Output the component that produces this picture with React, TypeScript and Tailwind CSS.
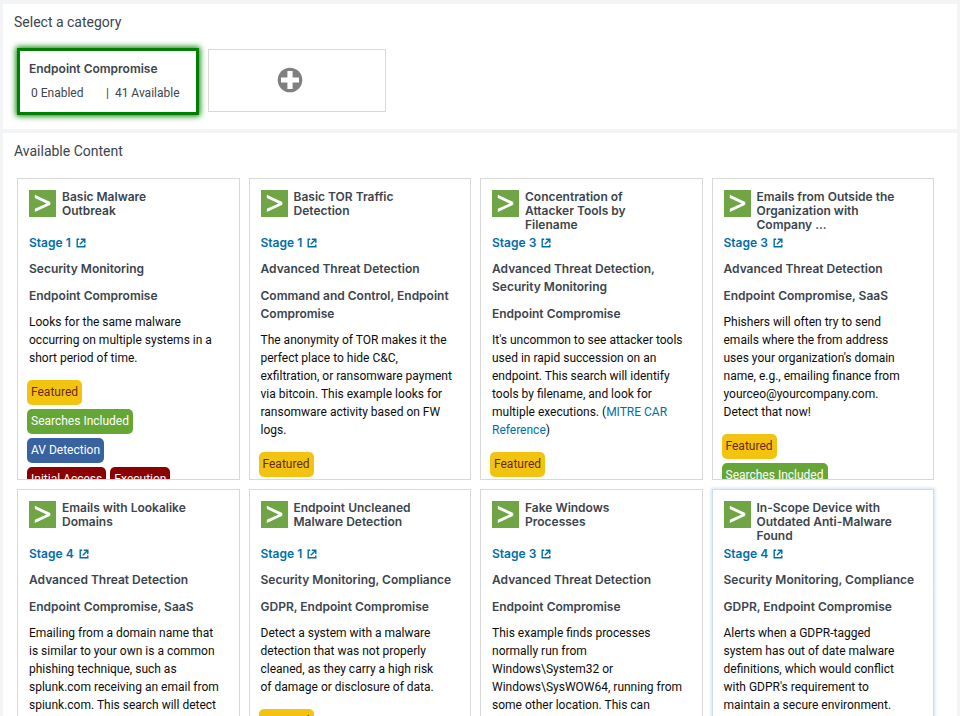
import React from "react";

type Tag = { label: string; style: string };

type Item = {
  title: string;
  stage: number;
  useCase: string;
  category: string;
  description: React.ReactNode;
  tags: Tag[];
  active?: boolean;
};

const featured: Tag = { label: "Featured", style: "bg-[#f2c311] text-[#6b2a12]" };
const searches: Tag = { label: "Searches Included", style: "bg-[#65a637] text-white" };
const avDetection: Tag = { label: "AV Detection", style: "bg-[#3863a0] text-white" };
const initialAccess: Tag = { label: "Initial Access", style: "bg-[#8b0000] text-white" };
const execution: Tag = { label: "Execution", style: "bg-[#8b0000] text-white" };

const items: Item[] = [
  {
    title: "Basic Malware\nOutbreak",
    stage: 1,
    useCase: "Security Monitoring",
    category: "Endpoint Compromise",
    description:
      "Looks for the same malware occurring on multiple systems in a short period of time.",
    tags: [featured, searches, avDetection, initialAccess, execution],
  },
  {
    title: "Basic TOR Traffic\nDetection",
    stage: 1,
    useCase: "Advanced Threat Detection",
    category: "Command and Control, Endpoint Compromise",
    description:
      "The anonymity of TOR makes it the perfect place to hide C&C, exfiltration, or ransomware payment via bitcoin. This example looks for ransomware activity based on FW logs.",
    tags: [featured],
  },
  {
    title: "Concentration of\nAttacker Tools by\nFilename",
    stage: 3,
    useCase: "Advanced Threat Detection, Security Monitoring",
    category: "Endpoint Compromise",
    description: (
      <>
        It's uncommon to see attacker tools used in rapid succession on an endpoint. This search
        will identify tools by filename, and look for multiple executions. (
        <a href="#mitre" className="text-[#006eaa]">
          MITRE CAR Reference
        </a>
        )
      </>
    ),
    tags: [featured],
  },
  {
    title: "Emails from Outside the\nOrganization with\nCompany ...",
    stage: 3,
    useCase: "Advanced Threat Detection",
    category: "Endpoint Compromise, SaaS",
    description:
      "Phishers will often try to send\nemails where the from address\nuses your organization's domain\nname, e.g., emailing finance from yourceo@yourcompany.com.\nDetect that now!",
    tags: [featured, searches],
  },
  {
    title: "Emails with Lookalike\nDomains",
    stage: 4,
    useCase: "Advanced Threat Detection",
    category: "Endpoint Compromise, SaaS",
    description:
      "Emailing from a domain name that\nis similar to your own is a common\nphishing technique, such as splunk.com receiving an email from spiunk.com. This search will detect",
    tags: [],
  },
  {
    title: "Endpoint Uncleaned\nMalware Detection",
    stage: 1,
    useCase: "Security Monitoring, Compliance",
    category: "GDPR, Endpoint Compromise",
    description:
      "Detect a system with a malware detection that was not properly cleaned, as they carry a high risk\nof damage or disclosure of data.",
    tags: [featured],
  },
  {
    title: "Fake Windows\nProcesses",
    stage: 3,
    useCase: "Advanced Threat Detection",
    category: "Endpoint Compromise",
    description:
      "This example finds processes normally run from Windows\\System32 or Windows\\SysWOW64, running from some other location. This can",
    tags: [],
  },
  {
    title: "In-Scope Device with\nOutdated Anti-Malware\nFound",
    stage: 4,
    useCase: "Security Monitoring, Compliance",
    category: "GDPR, Endpoint Compromise",
    description:
      "Alerts when a GDPR-tagged\nsystem has out of date malware\ndefinitions, which would conflict\nwith GDPR's requirement to\nmaintain a secure environment.",
    tags: [],
    active: true,
  },
];

function SearchIcon() {
  return (
    <svg viewBox="0 0 27 27" className="size-[27px] shrink-0" aria-hidden="true">
      <rect width="27" height="27" fill="#6fa544" />
      <path d="M5.8 4.8 L21.3 12 V14.8 L5.8 22 V18.8 L17.6 13.4 L5.8 8 Z" fill="#fff" />
    </svg>
  );
}

function ExternalIcon() {
  return (
    <svg
      viewBox="0 0 10 10"
      className="size-[10px]"
      fill="none"
      stroke="currentColor"
      strokeWidth="1.4"
      aria-hidden="true"
    >
      <path d="M3.2 1.2 H1.2 V8.8 H8.8 V6.6" />
      <path d="M4.8 1.2 H8.8 V5" />
      <path d="M8.6 1.4 L3.8 6.2" />
    </svg>
  );
}

function Card({ item }: { item: Item }) {
  return (
    <article
      className={
        "h-[302px] overflow-hidden border pt-[11px] pr-[15px] pl-[11px] " +
        (item.active
          ? "border-[#cfdde8] shadow-[0_0_3px_1px_#cfe3f2]"
          : "border-[#d8d8d8]")
      }
    >
      <header className="flex h-[44px] gap-[6px]">
        <SearchIcon />
        <h3 className="font-[Inter,sans-serif] leading-[14px] font-semibold whitespace-pre-line">
          {item.title}
        </h3>
      </header>
      <div className="font-[Inter,sans-serif] font-semibold">
        <a href="#stage" className="flex items-center gap-[5px] text-[#006eaa]">
          Stage {item.stage}
          <ExternalIcon />
        </a>
        <p className="mt-2">{item.useCase}</p>
        <p className="mt-[9px]">{item.category}</p>
      </div>
      <p className="mt-2 whitespace-pre-line text-[#0c0c0c]">{item.description}</p>
      <ul className="mt-[13px] -ml-[2px] flex w-[150px] flex-wrap gap-1">
        {item.tags.map((tag) => (
          <li key={tag.label} className={"h-[25px] rounded-[5px] px-1 leading-[25px] " + tag.style}>
            {tag.label}
          </li>
        ))}
      </ul>
    </article>
  );
}

export default function App() {
  return (
    <main className="flex h-screen flex-col gap-1 overflow-hidden bg-[#f2f4f5] px-[3px] pt-1 font-[Roboto,sans-serif] text-[12px] leading-[18px] text-[#3c444d]">
      <section className="shrink-0 bg-white px-[14px] pb-[14px]">
        <h2 className="-ml-[3px] pt-2 text-[14px] leading-5">Select a category</h2>
        <div className="mt-4 flex gap-[9px]">
          <button
            type="button"
            className="h-[67px] w-[182px] border-3 border-[#008000] px-[9px] pb-[2px] text-left shadow-[0_0_6px_1px_#008000]"
          >
            <span className="block font-[Inter,sans-serif] font-semibold">Endpoint Compromise</span>
            <span className="mt-[6px] flex pl-[2px]">
              <span className="w-[75px]">0 Enabled</span>
              <span>|&nbsp; 41 Available</span>
            </span>
          </button>
          <button
            type="button"
            aria-label="Add category"
            className="mt-px flex h-[63px] w-[178px] items-center border border-[#d8d8d8] pb-[2px] pl-[68px]"
          >
            <svg viewBox="0 0 26 26" className="size-[26px]" aria-hidden="true">
              <circle cx="13" cy="13" r="12.3" fill="#808080" />
              <path d="M13 4 V22 M4 13 H22" stroke="#fff" strokeWidth="5.2" />
            </svg>
          </button>
        </div>
      </section>
      <section className="grow bg-white pr-[23px] pl-[14px]">
        <h2 className="-ml-[3px] pt-2 text-[14px] leading-5">Available Content</h2>
        <div className="mt-[17px] grid grid-cols-4 gap-[9px]">
          {items.map((item) => (
            <Card key={item.title} item={item} />
          ))}
        </div>
      </section>
    </main>
  );
}
